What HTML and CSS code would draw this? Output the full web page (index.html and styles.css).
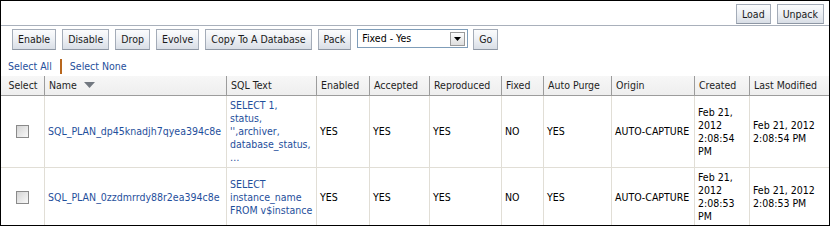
FILE: index.html
```html
<!DOCTYPE html>
<html>
<head>
<meta charset="utf-8">
<link rel="stylesheet" href="styles.css">
</head>
<body>
<div class="frame">
  <div class="topbar">
    <button class="btn btn-sm">Load</button>
    <button class="btn btn-sm">Unpack</button>
  </div>
  <div class="toolbar">
    <button class="btn">Enable</button>
    <button class="btn">Disable</button>
    <button class="btn">Drop</button>
    <button class="btn">Evolve</button>
    <button class="btn">Copy To A Database</button>
    <button class="btn">Pack</button>
    <div class="choice">
      <span class="choice-text">Fixed - Yes</span>
      <span class="choice-arrow"><svg width="7" height="4" viewBox="0 0 7 4"><polygon points="0,0 7,0 3.5,4" fill="#000"/></svg></span>
    </div>
    <button class="btn">Go</button>
  </div>
  <div class="selectlinks">
    <a class="link">Select All</a>
    <span class="sep"></span>
    <a class="link">Select None</a>
  </div>
  <table class="grid">
    <colgroup>
      <col class="c-select"><col class="c-name"><col class="c-sql"><col class="c-enabled"><col class="c-accepted"><col class="c-repro"><col class="c-fixed"><col class="c-purge"><col class="c-origin"><col class="c-created"><col class="c-mod">
    </colgroup>
    <thead>
      <tr>
        <th class="th-select">Select</th>
        <th>Name<svg class="sort" width="11" height="6" viewBox="0 0 11 6"><polygon points="0,0 11,0 5.5,6" fill="#727880"/></svg></th>
        <th>SQL Text</th>
        <th>Enabled</th>
        <th>Accepted</th>
        <th>Reproduced</th>
        <th>Fixed</th>
        <th>Auto Purge</th>
        <th>Origin</th>
        <th>Created</th>
        <th>Last Modified</th>
      </tr>
    </thead>
    <tbody>
      <tr>
        <td class="td-select"><span class="check"></span></td>
        <td><a class="link">SQL_PLAN_dp45knadjh7qyea394c8e</a></td>
        <td><a class="link">SELECT 1,<br>status, '',archiver, database_status, …</a></td>
        <td>YES</td>
        <td>YES</td>
        <td>YES</td>
        <td>NO</td>
        <td>YES</td>
        <td>AUTO-CAPTURE</td>
        <td>Feb 21, 2012 2:08:54 PM</td>
        <td>Feb 21, 2012 2:08:54 PM</td>
      </tr>
      <tr>
        <td class="td-select"><span class="check"></span></td>
        <td><a class="link">SQL_PLAN_0zzdmrrdy88r2ea394c8e</a></td>
        <td><a class="link">SELECT instance_name FROM v$instance</a></td>
        <td>YES</td>
        <td>YES</td>
        <td>YES</td>
        <td>NO</td>
        <td>YES</td>
        <td>AUTO-CAPTURE</td>
        <td>Feb 21, 2012 2:08:53 PM</td>
        <td>Feb 21, 2012 2:08:53 PM</td>
      </tr>
    </tbody>
  </table>
</div>
</body>
</html>
```
FILE: styles.css
```css
html, body {
  margin: 0;
  padding: 0;
  background: #fff;
}

.frame {
  width: 830px;
  height: 226px;
  box-sizing: border-box;
  border: 1px solid #000;
  overflow: hidden;
  font-family: "DejaVu Sans Condensed", "DejaVu Sans", sans-serif;
  font-stretch: condensed;
  font-size: 10.5px;
  color: #000;
}

.topbar {
  height: 25px;
  box-sizing: border-box;
  padding: 3px 5px 0 0;
  display: flex;
  justify-content: flex-end;
  align-items: flex-start;
  gap: 6px;
  border-bottom: 1px solid #a9b0bb;
}

.btn {
  font: inherit;
  font-stretch: condensed;
  color: #1a1a1a;
  height: 21px;
  padding: 0 5px;
  margin: 0;
  border: 1px solid #a4acb8;
  border-bottom-color: #8e97a4;
  border-radius: 0;
  background: linear-gradient(#fbfcfd 0%, #eef1f5 45%, #d9dee6 100%);
  line-height: 19px;
  white-space: nowrap;
}

.btn-sm {
  height: 20px;
  line-height: 18px;
}

.toolbar {
  display: flex;
  align-items: flex-start;
  gap: 6px;
  padding: 3px 0 0 11px;
}

.choice {
  width: 111px;
  height: 19px;
  box-sizing: border-box;
  border: 1px solid #7f9db9;
  background: #fff;
  display: flex;
  align-items: center;
  justify-content: space-between;
  padding: 0 2px 0 4px;
  margin-right: -1px;
}

.choice-text {
  color: #000;
  line-height: 15px;
}

.choice-arrow {
  width: 15px;
  height: 14px;
  box-sizing: border-box;
  border: 1px solid #9a9a9a;
  background: linear-gradient(#fdfdfd, #dedede);
  display: flex;
  align-items: center;
  justify-content: center;
}

.selectlinks {
  display: flex;
  align-items: center;
  height: 14px;
  margin: 9px 0 3px 7px;
  line-height: 14px;
}

.link {
  color: #1f4f9c;
  text-decoration: none;
}

.sep {
  width: 2px;
  height: 15px;
  background: #b8671e;
  margin: 0 8px 0 8px;
}

.grid {
  width: 828px;
  table-layout: fixed;
  border-collapse: separate;
  border-spacing: 0;
}

.c-select { width: 43px; }
.c-name { width: 182px; }
.c-sql { width: 90px; }
.c-enabled { width: 53px; }
.c-accepted { width: 60px; }
.c-repro { width: 72px; }
.c-fixed { width: 42px; }
.c-purge { width: 68px; }
.c-origin { width: 83px; }
.c-created { width: 55px; }
.c-mod { width: 80px; }

.grid th {
  height: 19px;
  padding: 0 3px 0 4px;
  font-weight: normal;
  text-align: left;
  white-space: nowrap;
  color: #1e1e1e;
  background: linear-gradient(#f7f7f7, #eeeeee);
  border-bottom: 1px solid #9c9c9c;
  border-left: 1px solid #9c9c9c;
  line-height: 19px;
  overflow: hidden;
}

.grid th.th-select {
  border-left: none;
  text-align: center;
}

.sort {
  margin-left: 7px;
  vertical-align: 1px;
}

.grid td {
  padding: 3px 2px 3px 3px;
  line-height: 13px;
  vertical-align: middle;
  text-align: left;
  border-left: 1px solid #e1ded6;
  border-bottom: 1px solid #e1ded6;
}

.grid td.td-select {
  border-left: none;
  text-align: center;
  padding: 0;
}

.check {
  display: inline-block;
  width: 13px;
  height: 13px;
  box-sizing: border-box;
  border: 1px solid #8a8a8a;
  background: linear-gradient(135deg, #d4d4d4, #f9f9f9);
  vertical-align: middle;
}
```
